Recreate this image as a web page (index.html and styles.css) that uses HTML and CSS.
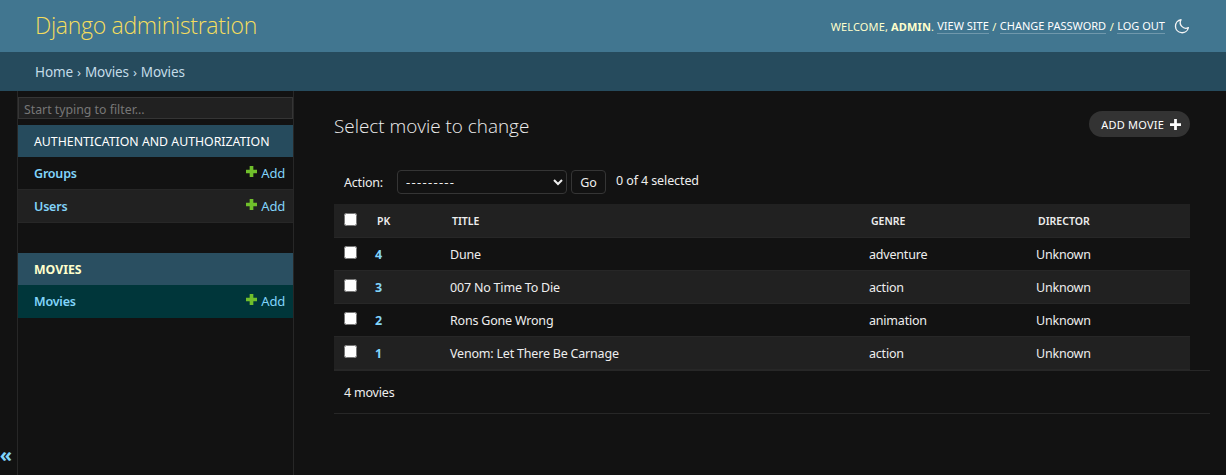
FILE: index.html
```html
<!DOCTYPE html>
<html lang="en">
<head>
<meta charset="utf-8">
<title>Select movie to change | Django site admin</title>
<link rel="stylesheet" href="styles.css">
</head>
<body>
<header class="header">
  <h1 class="brand">Django administration</h1>
  <div class="tools">
    <span class="welcome">Welcome, <strong>admin</strong>. </span><a href="#">View site</a><span class="sep">/</span><a href="#">Change password</a><span class="sep">/</span><a href="#">Log out</a>
    <svg class="moon" viewBox="0 0 24 24" width="16" height="16"><path d="M10.6 2.6A9.8 9.8 0 1 0 21.6 14.4 8.4 8.4 0 0 1 10.6 2.6Z" fill="none" stroke="#f5f5f5" stroke-width="2" stroke-linejoin="round"/></svg>
  </div>
</header>
<nav class="crumbs"><a href="#">Home</a> <span class="arrow">›</span> <a href="#">Movies</a> <span class="arrow">›</span> Movies</nav>
<div class="main">
  <button class="toggle" type="button">«</button>
  <aside class="sidebar">
    <input class="filter" type="text" placeholder="Start typing to filter...">
    <section class="app">
      <h2 class="caption">Authentication and Authorization</h2>
      <div class="row"><a href="#" class="model">Groups</a><a href="#" class="add"><svg class="plus" viewBox="0 0 12 12" width="11" height="11"><path d="M4 0h4v4h4v4H8v4H4V8H0V4h4Z" fill="#70bf2b"/></svg>Add</a></div>
      <div class="row alt"><a href="#" class="model">Users</a><a href="#" class="add"><svg class="plus" viewBox="0 0 12 12" width="11" height="11"><path d="M4 0h4v4h4v4H8v4H4V8H0V4h4Z" fill="#70bf2b"/></svg>Add</a></div>
    </section>
    <section class="app">
      <h2 class="caption current">Movies</h2>
      <div class="row selected"><a href="#" class="model">Movies</a><a href="#" class="add"><svg class="plus" viewBox="0 0 12 12" width="11" height="11"><path d="M4 0h4v4h4v4H8v4H4V8H0V4h4Z" fill="#70bf2b"/></svg>Add</a></div>
    </section>
  </aside>
  <main class="content">
    <div class="titlebar">
      <h1 class="title">Select movie to change</h1>
      <a href="#" class="addlink">Add movie<svg class="addplus" viewBox="0 0 12 12" width="11" height="11"><path d="M4.500 0h3v4.500h4.500v3H7.500v4.500h-3V7.500H0v-3h4.500Z" fill="#fff"/></svg></a>
    </div>
    <div class="list">
      <div class="actions">
        <label class="action-label">Action:</label>
        <select class="select"><option>---------</option></select>
        <button class="go" type="button">Go</button>
        <span class="count">0 of 4 selected</span>
      </div>
      <table class="table">
        <thead>
          <tr><th class="c-check"><input type="checkbox"></th><th class="c-pk">PK</th><th class="c-title">Title</th><th class="c-genre">Genre</th><th class="c-dir">Director</th></tr>
        </thead>
        <tbody>
          <tr><td><input type="checkbox"></td><td><a href="#" class="pk">4</a></td><td>Dune</td><td>adventure</td><td>Unknown</td></tr>
          <tr class="even"><td><input type="checkbox"></td><td><a href="#" class="pk">3</a></td><td>007 No Time To Die</td><td>action</td><td>Unknown</td></tr>
          <tr><td><input type="checkbox"></td><td><a href="#" class="pk">2</a></td><td>Rons Gone Wrong</td><td>animation</td><td>Unknown</td></tr>
          <tr class="even"><td><input type="checkbox"></td><td><a href="#" class="pk">1</a></td><td>Venom: Let There Be Carnage</td><td>action</td><td>Unknown</td></tr>
        </tbody>
      </table>
      <p class="paginator">4 movies</p>
    </div>
  </main>
</div>
</body>
</html>
```
FILE: styles.css
```css
* { box-sizing: border-box; }
html, body { height: 100%; }
body {
  margin: 0;
  display: flex;
  flex-direction: column;
  background: #121212;
  color: #eeeeee;
  font-family: "Noto Sans", "Open Sans", sans-serif;
  font-size: 12.500px;
  letter-spacing: -0.2px;
  overflow: hidden;
}
a { text-decoration: none; }

.header {
  height: 52px;
  flex: none;
  display: flex;
  align-items: center;
  justify-content: space-between;
  padding: 0 36px 0 35px;
  background: #417690;
  color: #ffc;
}
.brand {
  margin: 0 0 2px;
  font-size: 23px;
  font-weight: 300;
  color: #f5dd5d;
  font-family: "Open Sans", sans-serif;
  letter-spacing: -0.3px;
}
.tools {
  display: flex;
  align-items: center;
  font-size: 11px;
  letter-spacing: 0;
  text-transform: uppercase;
  white-space: pre;
}
.welcome { letter-spacing: 0.15px; }
.tools strong { font-weight: 700; }
.tools a { color: #fff; border-bottom: 1px solid rgba(255,255,255,0.25); line-height: 14px; }
.sep { margin: 0 3.500px; }
.moon { margin-left: 9px; }

.crumbs {
  height: 39px;
  flex: none;
  display: flex;
  align-items: center;
  gap: 4px;
  padding: 0 35px;
  background: #264b5d;
  color: #c4dce8;
  font-size: 13.500px;
  letter-spacing: -0.1px;
}
.crumbs a { color: #c4dce8; }
.arrow { font-size: 13px; }

.main { flex: 1; display: flex; min-height: 0; }
.toggle {
  width: 18px;
  flex: none;
  padding: 0 5px 0 0;
  display: flex;
  align-items: flex-end;
  justify-content: center;
  border: 0;
  border-right: 1px solid #272727;
  background: #121212;
  color: #81d4fa;
  font-size: 20px;
  font-weight: 700;
  line-height: 40px;
  font-family: "Noto Sans", sans-serif;
}
.sidebar {
  width: 276px;
  flex: none;
  border-right: 1px solid #272727;
  padding-top: 6px;
}
.filter {
  display: block;
  width: 275px;
  height: 22px;
  margin-bottom: 6px;
  padding: 3px 5px 0;
  background: #212121;
  border: 1px solid #353535;
  color: #eee;
  font: 12.300px "Noto Sans", sans-serif;
}
.filter::placeholder { color: #777777; }
.app { margin-bottom: 30px; }
.caption {
  margin: 0;
  height: 32px;
  display: flex;
  align-items: center;
  padding-left: 16px;
  background: #264b5d;
  color: #fff;
  font-size: 12.300px;
  font-weight: 400;
  letter-spacing: 0;
  text-transform: uppercase;
}
.caption.current { background: #2a4f61; font-weight: 700; color: #ffc; }
.row {
  height: 33px;
  display: flex;
  align-items: center;
  justify-content: space-between;
  padding: 0 8px 0 16px;
  border-bottom: 1px solid #272727;
}
.row.alt { background: #212121; }
.row.selected { background: #00363a; border-bottom-color: #00363a; }
.model { color: #81d4fa; font-weight: 600; }
.add { color: #81d4fa; display: flex; align-items: center; font-size: 13px; }
.plus { margin-right: 4px; margin-top: -3px; }

.content { flex: 1; min-width: 0; padding: 20px 16px 0 40px; }
.titlebar {
  height: 26px;
  margin-right: 20px;
  display: flex;
  align-items: center;
  justify-content: space-between;
}
.title { margin: 4px 0 0; font-size: 18.900px; font-weight: 300; color: #eeeeee; font-family: "Open Sans", sans-serif; letter-spacing: 0; }
.addlink {
  height: 26px;
  display: flex;
  align-items: center;
  gap: 6px;
  padding: 0 9px 0 12px;
  border-radius: 13px;
  background: #333333;
  color: #fff;
  font-size: 11px;
  font-weight: 400;
  letter-spacing: 0.2px;
  text-transform: uppercase;
}
.list { margin-top: 33px; }
.actions {
  height: 24px;
  margin-right: 20px;
  display: flex;
  align-items: center;
  padding-left: 10px;
  margin-bottom: 10px;
}
.action-label { margin-right: 14px; }
.select {
  width: 170px;
  height: 24px;
  padding: 0 4px;
  background: #121212;
  border: 1px solid #353535;
  border-radius: 4px;
  color: #eee;
  font: 13px "Noto Sans", sans-serif;
  letter-spacing: 1.300px;
}
.go {
  height: 24px;
  width: 35px;
  margin-left: 4px;
  padding: 0;
  background: #121212;
  border: 1px solid #353535;
  border-radius: 4px;
  color: #eee;
  font: 12.500px "Noto Sans", sans-serif;
}
.count { margin-left: 10px; margin-top: -3px; letter-spacing: -0.1px; }

.table {
  width: 856px;
  border-collapse: collapse;
  table-layout: fixed;
}
.table th {
  height: 33px;
  padding: 2px 0 0 2px;
  background: #212121;
  color: #eee;
  font-size: 10.500px;
  font-weight: 600;
  letter-spacing: 0;
  text-align: left;
  text-transform: uppercase;
  border-bottom: 1px solid #272727;
}
.table th.c-check { padding-left: 0; padding-top: 0; }
.table td {
  height: 33px;
  padding: 2px 0 0;
  border-bottom: 1px solid #272727;
}
.table input { display: block; width: 13px; height: 13px; margin: -5px 0 0 10px; }
.table th input { margin-top: -2px; }
.even td { background: #212121; }
.c-check { width: 41px; }
.c-pk { width: 75px; }
.c-genre { width: 167px; }
.c-dir { width: 154px; }
.pk { color: #81d4fa; font-weight: 700; }
.paginator {
  height: 44px;
  margin: 0;
  display: flex;
  align-items: center;
  padding: 2px 0 0 10px;
  border-top: 1px solid #272727;
  border-bottom: 1px solid #272727;
}
```
